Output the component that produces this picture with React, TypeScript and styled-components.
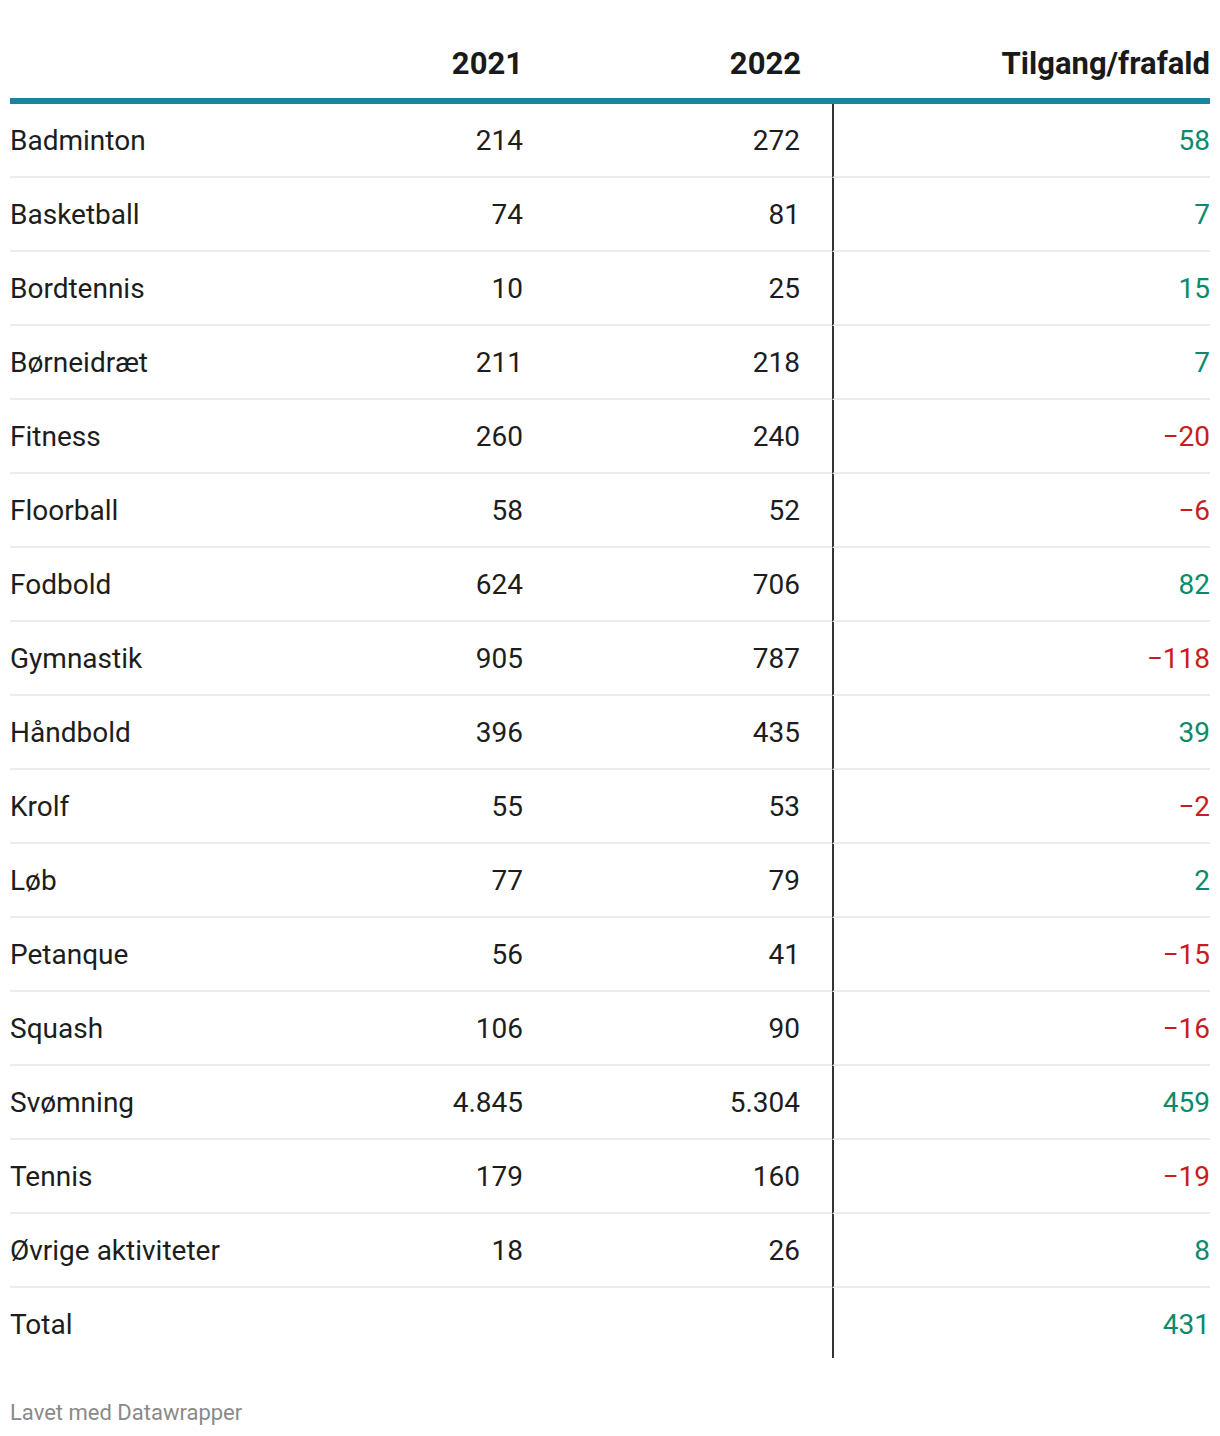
import React from "react";
import styled, { createGlobalStyle } from "styled-components";

const Global = createGlobalStyle`
  html, body { margin: 0; padding: 0; background: #fff; }
  body { font-family: Roboto, "Liberation Sans", Arial, sans-serif; }
`;

type Row = { name: string; a: string; b: string; d: number | null; dText: string };

const rows: Row[] = [
  { name: "Badminton", a: "214", b: "272", d: 58, dText: "58" },
  { name: "Basketball", a: "74", b: "81", d: 7, dText: "7" },
  { name: "Bordtennis", a: "10", b: "25", d: 15, dText: "15" },
  { name: "Børneidræt", a: "211", b: "218", d: 7, dText: "7" },
  { name: "Fitness", a: "260", b: "240", d: -20, dText: "−20" },
  { name: "Floorball", a: "58", b: "52", d: -6, dText: "−6" },
  { name: "Fodbold", a: "624", b: "706", d: 82, dText: "82" },
  { name: "Gymnastik", a: "905", b: "787", d: -118, dText: "−118" },
  { name: "Håndbold", a: "396", b: "435", d: 39, dText: "39" },
  { name: "Krolf", a: "55", b: "53", d: -2, dText: "−2" },
  { name: "Løb", a: "77", b: "79", d: 2, dText: "2" },
  { name: "Petanque", a: "56", b: "41", d: -15, dText: "−15" },
  { name: "Squash", a: "106", b: "90", d: -16, dText: "−16" },
  { name: "Svømning", a: "4.845", b: "5.304", d: 459, dText: "459" },
  { name: "Tennis", a: "179", b: "160", d: -19, dText: "−19" },
  { name: "Øvrige aktiviteter", a: "18", b: "26", d: 8, dText: "8" },
  { name: "Total", a: "", b: "", d: 431, dText: "431" },
];

const Wrap = styled.div`
  padding: 0 10px;
  width: 1200px;
`;

const Grid = styled.div`
  display: grid;
  grid-template-columns: 290px 223px 309px 378px;
  color: #1d1d1d;
`;

const HeadCell = styled.div<{ $divider?: boolean }>`
  height: 104px;
  box-sizing: border-box;
  display: flex;
  align-items: flex-end;
  justify-content: flex-end;
  padding-bottom: 16px;
  font-weight: 700;
  font-size: 31px;
  line-height: 36px;
  color: #1a1a1a;
  border-bottom: 6px solid #1d81a2;
  padding-right: ${(p) => (p.$divider ? "31px" : "0")};
`;

const Cell = styled.div<{ $align?: "left" | "right"; $last?: boolean; $pr?: number; $divider?: boolean; $tone?: "pos" | "neg" | "none" }>`
  height: ${(p) => (p.$last ? "70px" : "74px")};
  box-sizing: border-box;
  border-bottom: ${(p) => (p.$last ? "none" : "2px solid #ececec")};
  display: flex;
  align-items: center;
  justify-content: ${(p) => (p.$align === "left" ? "flex-start" : "flex-end")};
  padding-top: ${(p) => (p.$last ? "3px" : "1px")};
  padding-right: ${(p) => p.$pr ?? 0}px;
  font-size: 28px;
  line-height: 32px;
  border-left: ${(p) => (p.$divider ? "2px solid #333" : "none")};
  color: ${(p) => (p.$tone === "pos" ? "#0c8a6c" : p.$tone === "neg" ? "#c71e1d" : "#1d1d1d")};
  white-space: nowrap;
`;

const Footer = styled.div`
  margin-top: 42px;
  font-size: 22px;
  color: #8a8a8a;
  line-height: 26px;
`;

export default function App() {
  return (
    <Wrap>
      <Global />
      <Grid>
        <HeadCell />
        <HeadCell>2021</HeadCell>
        <HeadCell $divider>2022</HeadCell>
        <HeadCell>Tilgang/frafald</HeadCell>
        {rows.map((r, i) => {
          const last = i === rows.length - 1;
          const tone = r.d === null ? "none" : r.d < 0 ? "neg" : "pos";
          return (
            <React.Fragment key={r.name}>
              <Cell $align="left" $last={last}>{r.name}</Cell>
              <Cell $last={last}>{r.a}</Cell>
              <Cell $last={last} $pr={32}>{r.b}</Cell>
              <Cell $last={last} $divider $tone={tone}>{r.dText}</Cell>
            </React.Fragment>
          );
        })}
      </Grid>
      <Footer>Lavet med Datawrapper</Footer>
    </Wrap>
  );
}
